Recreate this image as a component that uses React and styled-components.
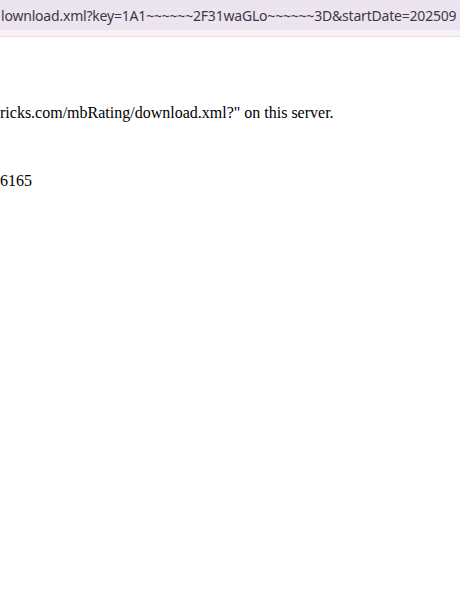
import styled, { createGlobalStyle } from 'styled-components'

const Global = createGlobalStyle`
    html, body {
        margin: 0;
        padding: 0;
        background: #ffffff;
        overflow: hidden;
    }
`

const Page = styled.div`
    width: 460px;
    height: 614px;
    overflow: hidden;
    display: flex;
    flex-direction: column;
`

// address bar, the url is longer than the window
const UrlBar = styled.div`
    height: 30px;
    background: #ece5ef;
    display: flex;
    align-items: center;
    white-space: nowrap;
    overflow: hidden;
    font-family: 'Noto Sans', 'DejaVu Sans', sans-serif;
    font-size: 14px;
    letter-spacing: -0.2px;
    color: #3d3846;
`

const UrlText = styled.span`
    margin-left: 1px;
`

const Strip = styled.div`
    height: 6px;
    background: #f8f2f8;
    border-bottom: 1px solid #e6dde7;
`

const Body = styled.div`
    padding-top: 66px;
    font-family: 'Liberation Serif', serif;
    font-size: 16px;
    line-height: 19px;
    color: #000000;
    white-space: nowrap;
    display: flex;
    flex-direction: column;
    gap: 49px;
`

const Line = styled.p`
    margin: 0;
    margin-left: ${(p) => p.shift || 0}px;
`

const App = () => {
    return <Page>
                <Global/>
                <UrlBar>
                    <UrlText>lownload.xml?key=1A1~~~~~~2F31waGLo~~~~~~3D&amp;startDate=202509</UrlText>
                </UrlBar>
                <Strip/>
                <Body>
                    <Line>ricks.com/mbRating/download.xml?" on this server.</Line>
                    <Line>6165</Line>
                </Body>
           </Page>
}

export default App
